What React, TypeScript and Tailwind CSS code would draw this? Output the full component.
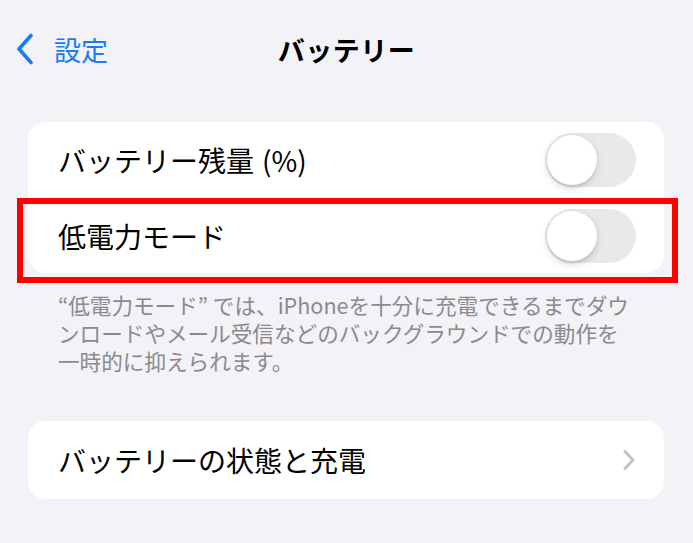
import React from "react";

const Toggle = () => (
  <div className="flex h-[54px] w-[91px] shrink-0 items-center rounded-full bg-[#e9e9eb] px-[2px]">
    <div className="h-[50px] w-[50px] rounded-full bg-white shadow-[0_3px_8px_rgba(0,0,0,0.15),0_3px_1px_rgba(0,0,0,0.06)]" />
  </div>
);

export default function App() {
  return (
    <div
      className="min-h-[543px] w-full bg-[#f2f2f7] text-black"
      style={{ fontFamily: '"Noto Sans CJK JP", "Noto Sans", sans-serif' }}
    >
      {/* nav bar */}
      <div className="relative flex h-[98px] items-center justify-center">
        <div className="absolute left-[16px] top-[33px] flex items-center gap-[20px]">
          <svg width="18" height="32" viewBox="0 0 18 32" fill="none">
            <path
              d="M15 2.5 L3 16 L15 29.5"
              stroke="#1a7cf5"
              strokeWidth="3.6"
              strokeLinecap="round"
              strokeLinejoin="round"
            />
          </svg>
          <span className="text-[27px] leading-none text-[#1a7cf5]">設定</span>
        </div>
        <span className="text-[27px] font-semibold leading-none tracking-[0.5px]">バッテリー</span>
      </div>

      <div className="px-[28px]">
        {/* toggles card */}
        <div className="relative mt-[24px] w-[636px] rounded-[18px] bg-white">
          <div className="flex h-[76px] items-center justify-between pl-[30px] pr-[28px]">
            <span className="text-[28px] leading-none">
              バッテリー残量<span className="ml-[8px]">(%)</span>
            </span>
            <Toggle />
          </div>
          <div className="flex h-[75px] items-center justify-between pl-[30px] pr-[28px]">
            <span className="text-[28px] leading-none">低電力モード</span>
            <Toggle />
          </div>
          <div className="pointer-events-none absolute left-[-11px] top-[76px] h-[85px] w-[661px] border-[6px] border-[#ff0000]" />
        </div>

        <p className="mt-[18px] whitespace-nowrap pl-[30px] text-[21.6px] leading-[28px] text-[#8a8a8e]">
          “低電力モード” では、iPhoneを十分に充電できるまでダウ
          <br />
          ンロードやメール受信などのバックグラウンドでの動作を
          <br />
          一時的に抑えられます。
        </p>

        {/* battery health card */}
        <div className="mt-[46px] flex h-[78px] w-[636px] items-center justify-between rounded-[18px] bg-white pl-[30px] pr-[28px]">
          <span className="text-[28px] leading-none">バッテリーの状態と充電</span>
          <svg width="14" height="22" viewBox="0 0 14 22" fill="none">
            <path
              d="M3 2.5 L11 11 L3 19.5"
              stroke="#c4c4c7"
              strokeWidth="3"
              strokeLinecap="round"
              strokeLinejoin="round"
            />
          </svg>
        </div>
      </div>
    </div>
  );
}
